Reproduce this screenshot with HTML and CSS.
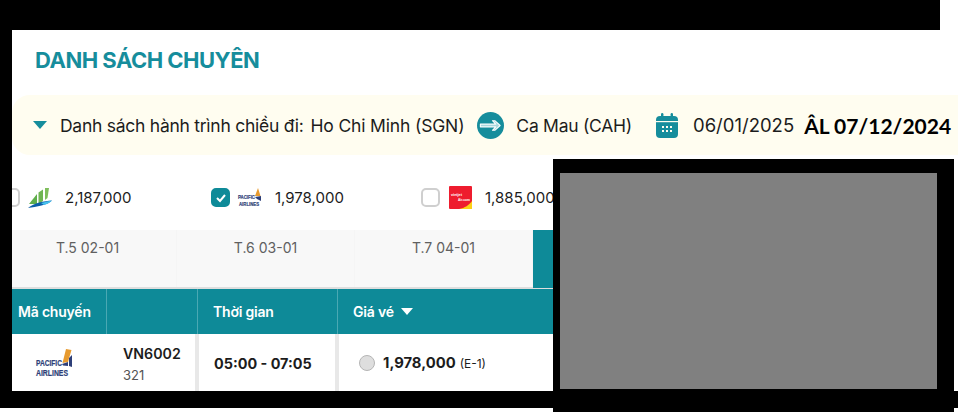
FILE: index.html
```html
<!DOCTYPE html>
<html lang="vi">
<head>
    <meta charset="UTF-8">
    <meta name="viewport" content="width=device-width, initial-scale=1.0">
    <title>Danh sách chuyến</title>
    <link rel="stylesheet" href="styles.css">
</head>
<body>
    <div class="top-bar"></div>
    <div class="middle">
        <div class="left-bar"></div>
        <div class="content">
            <h1 class="title">DANH SÁCH CHUYÊN</h1>

            <div class="route-bar">
                <span class="caret"></span>
                <span class="route-label">Danh sách hành trình chiều đi:</span>
                <span class="route-from">Ho Chi Minh (SGN)</span>
                <svg class="route-arrow" width="27" height="27" viewBox="0 0 28 28">
                    <circle cx="14" cy="14" r="14" fill="#168d9c"/>
                    <path d="M3.5 12.6H19.5L16 9H18.5L24 14L18.5 19H16L19.5 15.4H3.5Z" fill="#a9d6dc" stroke="#fff" stroke-width="1.1" stroke-linejoin="round"/>
                </svg>
                <span class="route-to">Ca Mau (CAH)</span>
                <svg class="route-cal" width="22" height="25" viewBox="0 0 22 25">
                    <rect x="0" y="3" width="22" height="22" rx="4" fill="#168d9c"/>
                    <rect x="5" y="0" width="2.4" height="6" rx="1.2" fill="#168d9c"/>
                    <rect x="14.6" y="0" width="2.4" height="6" rx="1.2" fill="#168d9c"/>
                    <rect x="0" y="8" width="22" height="1.2" fill="#fffdf0"/>
                    <g fill="#fffdf0">
                        <rect x="6" y="13" width="2" height="2"/>
                        <rect x="10" y="13" width="2" height="2"/>
                        <rect x="14" y="13" width="2" height="2"/>
                        <rect x="6" y="17" width="2" height="2"/>
                        <rect x="10" y="17" width="2" height="2"/>
                        <rect x="14" y="17" width="2" height="2"/>
                    </g>
                </svg>
                <span class="route-date">06/01/2025</span>
                <span class="route-lunar">ÂL 07/12/2024</span>
            </div>

            <div class="airlines">
                <div class="airline">
                    <span class="check"></span>
                    <svg class="airline-logo" width="24" height="20" viewBox="0 0 24 20">
                        <path d="M1 16L9 6V16Z" fill="#5fae4b"/>
                        <path d="M10.5 16V4.5L15 1.5V13Z" fill="#6fb552"/>
                        <path d="M17 12V0H21L19.5 10Z" fill="#7fbe5c"/>
                        <path d="M0 20C6 15 16 13 24 12.5C20 17 8 19 0 20Z" fill="#0c5ea8"/>
                        <path d="M13 15C17 14 21 13 24 12.5C22 15 19 16 16 17Z" fill="#45c0ee"/>
                    </svg>
                    <span class="airline-price">2,187,000</span>
                </div>
                <div class="airline">
                    <span class="check check-on">
                        <svg width="12" height="10" viewBox="0 0 12 10">
                            <path d="M2 5L5 8L10 2" fill="none" stroke="#fff" stroke-width="2"/>
                        </svg>
                    </span>
                    <svg class="airline-logo" width="24" height="20" viewBox="0 0 24 20">
                        <path d="M20 0L22.5 8H17Z" fill="#e79a2f"/>
                        <path d="M17 9L23 8V13L19 11Z" fill="#2e3f78"/>
                        <text class="logo-text-small" x="0" y="11" textLength="17" lengthAdjust="spacingAndGlyphs">PACIFIC</text>
                        <text class="logo-text-small" x="1" y="18" textLength="20" lengthAdjust="spacingAndGlyphs">AIRLINES</text>
                    </svg>
                    <span class="airline-price">1,978,000</span>
                </div>
                <div class="airline">
                    <span class="check"></span>
                    <svg class="airline-logo logo-vj" width="23" height="23" viewBox="0 0 23 23">
                        <rect width="23" height="23" rx="1" fill="#ee1c2e"/>
                        <path d="M23 15V23H10C16 22 20 19 23 15Z" fill="#fcd116"/>
                        <text class="logo-text-vj" x="2" y="10" textLength="11" lengthAdjust="spacingAndGlyphs">vietjet</text>
                        <text class="logo-text-vj" x="9" y="15" textLength="12" lengthAdjust="spacingAndGlyphs">Air.com</text>
                    </svg>
                    <span class="airline-price">1,885,000</span>
                </div>
            </div>

            <div class="days">
                <div class="day day-first">T.5 02-01</div>
                <div class="day">T.6 03-01</div>
                <div class="day">T.7 04-01</div>
                <div class="day day-active"></div>
            </div>

            <div class="flights">
                <div class="flights-head">
                    <div class="head-cell head-code">Mã chuyến</div>
                    <div class="head-cell"></div>
                    <div class="head-cell">Thời gian</div>
                    <div class="head-cell">Giá vé <span class="caret caret-white"></span></div>
                </div>
                <div class="flights-row">
                    <div class="cell-logo">
                        <svg class="logo-pacific" width="38" height="30" viewBox="0 0 38 30">
                            <path d="M31 1L36.5 2L33 14L27.5 15Z" fill="#e79a2f"/>
                            <path d="M27 16L33 14V18L28 17.5Z" fill="#2e3f78"/>
                            <path d="M34 10L37 7V19L34 18Z" fill="#2e3f78"/>
                            <text class="logo-text" x="1" y="18" textLength="26" lengthAdjust="spacingAndGlyphs">PACIFIC</text>
                            <text class="logo-text" x="1" y="27.5" textLength="32" lengthAdjust="spacingAndGlyphs">AIRLINES</text>
                        </svg>
                    </div>
                    <div class="cell-code">
                        <div class="code">VN6002</div>
                        <div class="plane">321</div>
                    </div>
                    <div class="cell-time">05:00 - 07:05</div>
                    <div class="cell-price">
                        <span class="radio"></span>
                        <span class="price">1,978,000</span>
                        <span class="fare">(E-1)</span>
                    </div>
                </div>
            </div>
        </div>
    </div>
    <div class="bottom-bar"></div>

    <div class="cover">
        <div class="cover-inner"></div>
    </div>
</body>
</html>
```

FILE: styles.css
```css
html, body {
    margin: 0;
    height: 412px;
    overflow: hidden;
    background-color: white;
}
body {
    font-family: Inter, "Noto Sans", sans-serif;
    color: #1c1c1c;
    position: relative;
}
svg {
    flex: none;
    overflow: visible;
}
.top-bar {
    width: 940px;
    height: 30px;
    background-color: black;
}
.middle {
    display: flex;
    height: 361px;
}
.left-bar {
    flex: none;
    width: 12px;
    background-color: black;
}
.bottom-bar {
    height: 17px;
    background-color: black;
}
.content {
    flex: 1;
    min-width: 0;
    overflow: hidden;
}
.title {
    margin: 0;
    height: 65px;
    padding: 16px 0 0 23px;
    box-sizing: border-box;
    font-size: 22px;
    line-height: 28px;
    font-weight: 700;
    letter-spacing: -0.5px;
    color: #168d9c;
}
.route-bar {
    display: flex;
    align-items: center;
    height: 60px;
    padding-left: 21px;
    background-color: #fffdf0;
    border-radius: 18px 0 0 18px;
    font-size: 17.5px;
    letter-spacing: -0.26px;
    white-space: nowrap;
}
.caret {
    display: inline-block;
    width: 0;
    height: 0;
    border-left: 7px solid transparent;
    border-right: 7px solid transparent;
    border-top: 8px solid #168d9c;
}
.caret-white {
    border-left-width: 6px;
    border-right-width: 6px;
    border-top: 7px solid white;
    margin-left: 7px;
}
.route-label {
    margin-left: 13px;
}
.route-from {
    margin-left: 7px;
    letter-spacing: -0.16px;
}
.route-arrow {
    margin-left: 13px;
}
.route-to {
    margin-left: 12px;
}
.route-cal {
    margin-left: 24px;
}
.route-date {
    margin-left: 15px;
    font-size: 18.5px;
    letter-spacing: 0;
}
.route-lunar {
    margin-left: 10px;
    font-family: Lato, sans-serif;
    font-weight: 700;
    font-size: 21px;
    letter-spacing: 0;
    color: black;
}
.airlines {
    display: flex;
    align-items: center;
    height: 75px;
    margin-left: -11px;
    padding-top: 10px;
    box-sizing: border-box;
}
.airline {
    flex: none;
    display: flex;
    align-items: center;
    width: 210px;
}
.check {
    flex: none;
    display: flex;
    align-items: center;
    justify-content: center;
    width: 19px;
    height: 19px;
    box-sizing: border-box;
    border: 2px solid #cfcfcf;
    border-radius: 5px;
    background-color: white;
}
.check-on {
    border-color: #0e8a98;
    background-color: #0e8a98;
}
.airline-logo {
    margin-left: 8px;
}
.airline-price {
    margin-left: 13px;
    font-size: 15px;
}
.logo-vj {
    margin-left: 9px;
}
.logo-text,
.logo-text-small {
    font-family: "Liberation Sans", sans-serif;
    font-weight: 700;
    fill: #2e3f78;
    stroke: #2e3f78;
    stroke-width: 0.2px;
}
.logo-text {
    font-size: 8.2px;
}
.logo-text-small {
    font-size: 5.5px;
}
.logo-text-vj {
    font-family: "Liberation Sans", sans-serif;
    font-weight: 700;
    font-size: 4px;
    fill: white;
}
.days {
    display: flex;
    width: 711px;
    height: 59px;
    margin-left: -13px;
    box-sizing: border-box;
    border-bottom: 2px solid #dedede;
}
.day {
    flex: none;
    width: 178px;
    padding-top: 9px;
    box-sizing: border-box;
    background-color: #f8f8f8;
    border-right: 1px solid #f5f5f5;
    text-align: center;
    font-size: 14px;
    line-height: 18px;
    color: #606060;
}
.day-active {
    width: 190px;
    background-color: #0e8a98;
    border-right: none;
    margin-bottom: -1px;
}
.flights {
    width: 542px;
}
.flights-head {
    display: grid;
    grid-template-columns: 95px 91px 140px 1fr;
    height: 45px;
    background-color: #0e8a98;
    color: white;
    font-size: 14px;
    font-weight: 600;
    letter-spacing: -0.2px;
}
.head-cell {
    display: flex;
    align-items: center;
    padding-left: 15px;
    border-right: 1px solid #4aa8b3;
}
.head-cell:last-child {
    border-right: none;
}
.head-code {
    padding-left: 6px;
}
.flights-row {
    display: grid;
    grid-template-columns: 94px 89px 140px 1fr;
    height: 57px;
    align-items: center;
}
.cell-logo {
    display: flex;
    padding-left: 23px;
    box-sizing: border-box;
}
.cell-code {
    padding: 2px 0 0 17px;
}
.code {
    font-size: 14.2px;
    line-height: 20px;
    font-weight: 600;
}
.plane {
    margin-top: 3px;
    font-size: 13px;
    line-height: 16px;
    color: #555;
}
.cell-time,
.cell-price {
    display: flex;
    align-items: center;
    height: 100%;
    padding-top: 1px;
    box-sizing: border-box;
    border-left: 4px solid #e8e8e8;
}
.cell-time {
    padding-left: 15px;
    font-size: 14.4px;
    font-weight: 700;
}
.cell-price {
    padding-left: 20px;
}
.radio {
    flex: none;
    width: 16px;
    height: 16px;
    box-sizing: border-box;
    border: 1px solid #b5b5b5;
    border-radius: 50%;
    background-color: #dedede;
}
.price {
    margin-left: 8px;
    font-size: 14.8px;
    font-weight: 700;
}
.fare {
    margin-left: 4px;
    font-size: 12px;
}
/* blanked out part of the screenshot */
.cover {
    position: absolute;
    left: 553px;
    top: 159px;
    width: 401px;
    height: 253px;
    padding: 14px 0 0 7px;
    box-sizing: border-box;
    background-color: black;
}
.cover-inner {
    width: 377px;
    height: 216px;
    background-color: #808080;
}
```
